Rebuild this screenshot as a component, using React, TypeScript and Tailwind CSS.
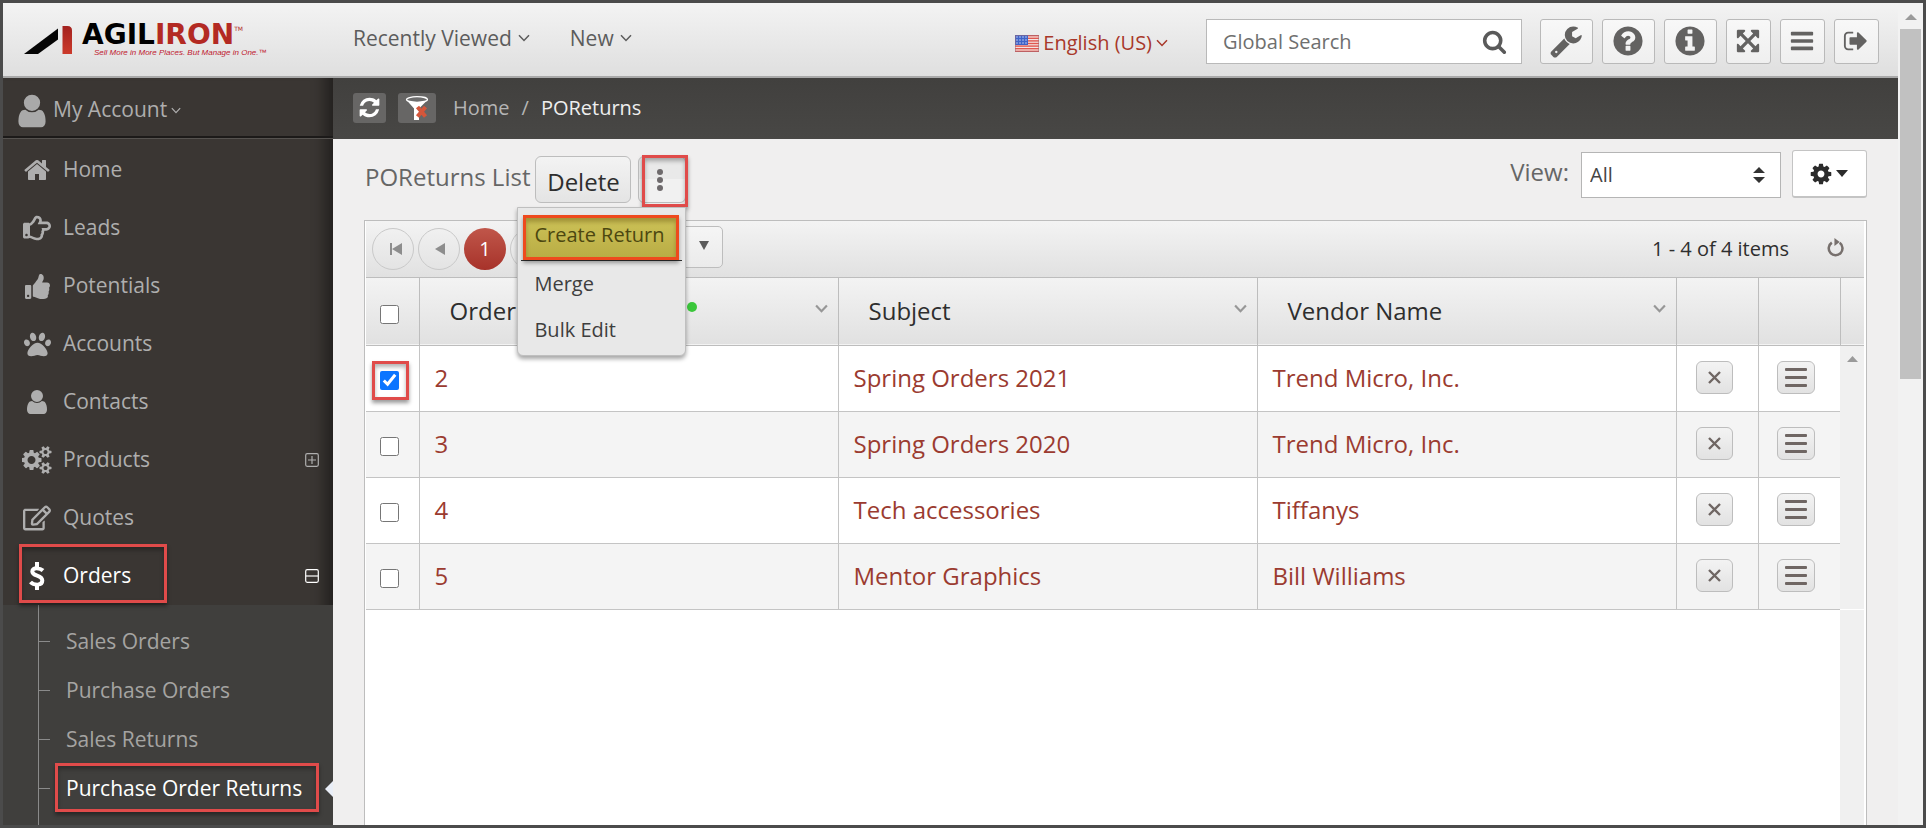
import type { ReactNode } from "react";
import { FaPaw, FaRegEdit, FaRegHandPointRight, FaThumbsUp } from "react-icons/fa";

const paths = {
  user: "M1536 1399q0 109-62.5 187t-150.5 78h-854q-88 0-150.5-78t-62.5-187q0-85 8.5-160.5t31.5-152 58.5-131 94-89 134.5-34.5q131 128 313 128t313-128q76 0 134.5 34.5t94 89 58.5 131 31.5 152 8.5 160.5zm-256-887q0 159-112.5 271.5t-271.5 112.5-271.5-112.5-112.5-271.5 112.5-271.5 271.5-112.5 271.5 112.5 112.5 271.5z",
  home: "M1472 992v480q0 26-19 45t-45 19h-384v-384h-256v384h-384q-26 0-45-19t-19-45v-480q0-1 .5-3t.5-3l575-474 575 474q1 2 1 6zm223-69l-62 74q-8 9-21 11h-3q-13 0-21-7l-692-577-692 577q-12 8-24 7-13-2-21-11l-62-74q-8-10-7-23.5t11-21.5l719-599q32-26 76-26t76 26l244 204v-195q0-14 9-23t23-9h192q14 0 23 9t9 23v408l219 182q10 8 11 21.5t-7 23.5z",
  wrench: "M448 1472q0-26-19-45t-45-19-45 19-19 45 19 45 45 19 45-19 19-45zm644-420l-682 682q-37 37-90 37-52 0-91-37l-106-108q-38-36-38-90 0-53 38-91l681-681q39 98 114.5 173.5t173.5 114.5zm634-435q0 39-23 106-47 134-164.5 217.5t-258.5 83.5q-185 0-316.5-131.5t-131.5-316.5 131.5-316.5 316.5-131.5q58 0 121.5 16.5t107.5 46.5q16 11 16 28t-16 28l-293 169v224l193 107q5-3 79-48.5t135.5-81 70.5-35.5q15 0 23.5 10t8.5 25z",
  question: "M1024 1376v-192q0-14-9-23t-23-9h-192q-14 0-23 9t-9 23v192q0 14 9 23t23 9h192q14 0 23-9t9-23zm256-672q0-88-55.5-163t-138.5-116-170-41q-243 0-371 213-15 24 8 42l132 100q7 6 19 6 16 0 25-12 53-68 86-92 34-24 86-24 48 0 85.5 26t37.5 59q0 38-20 61t-68 45q-63 28-115.5 86.5t-52.5 125.5v36q0 14 9 23t23 9h192q14 0 23-9t9-23q0-19 21.5-49.5t54.5-49.5q32-18 49-28.5t46-35 44.5-48 28-60.5 12.5-81zm384 192q0 209-103 385.5t-279.5 279.5-385.5 103-385.5-103-279.5-279.5-103-385.5 103-385.5 279.5-279.5 385.5-103 385.5 103 279.5 279.5 103 385.5z",
  info: "M1152 1376v-160q0-14-9-23t-23-9h-96v-512q0-14-9-23t-23-9h-320q-14 0-23 9t-9 23v160q0 14 9 23t23 9h96v320h-96q-14 0-23 9t-9 23v160q0 14 9 23t23 9h448q14 0 23-9t9-23zm-128-896v-160q0-14-9-23t-23-9h-192q-14 0-23 9t-9 23v160q0 14 9 23t23 9h192q14 0 23-9t9-23zm640 416q0 209-103 385.5t-279.5 279.5-385.5 103-385.5-103-279.5-279.5-103-385.5 103-385.5 279.5-279.5 385.5-103 385.5 103 279.5 279.5 103 385.5z",
  expand: "M1411 541l-355 355 355 355 144-144q29-31 70-14 39 17 39 59v448q0 26-19 45t-45 19h-448q-42 0-59-40-17-39 14-69l144-144-355-355-355 355 144 144q31 30 14 69-17 40-59 40h-448q-26 0-45-19t-19-45v-448q0-42 40-59 39-17 69 14l144 144 355-355-355-355-144 144q-19 19-45 19-12 0-24-5-40-17-40-59v-448q0-26 19-45t45-19h448q42 0 59 40 17 39-14 69l-144 144 355 355 355-355-144-144q-31-30-14-69 17-40 59-40h448q26 0 45 19t19 45v448q0 42-39 59-13 5-25 5-26 0-45-19z",
  bars: "M1664 1344v128q0 26-19 45t-45 19h-1408q-26 0-45-19t-19-45v-128q0-26 19-45t45-19h1408q26 0 45 19t19 45zm0-512v128q0 26-19 45t-45 19h-1408q-26 0-45-19t-19-45v-128q0-26 19-45t45-19h1408q26 0 45 19t19 45zm0-512v128q0 26-19 45t-45 19h-1408q-26 0-45-19t-19-45v-128q0-26 19-45t45-19h1408q26 0 45 19t19 45z",
  signOut: "M704 1440q0 4 1 20t.5 26.5-3 23.5-10 19.5-20.5 6.5h-320q-119 0-203.5-84.5t-84.5-203.5v-704q0-119 84.5-203.5t203.5-84.5h320q13 0 22.5 9.5t9.5 22.5q0 4 1 20t.5 26.5-3 23.5-10 19.5-20.5 6.5h-320q-66 0-113 47t-47 113v704q0 66 47 113t113 47h312l11.5 1 11.5 3 8 5.5 7 9 2 13.5zm928-544q0 26-19 45l-544 544q-19 19-45 19t-45-19-19-45v-288h-448q-26 0-45-19t-19-45v-384q0-26 19-45t45-19h448v-288q0-26 19-45t45-19 45 19l544 544q19 19 19 45z",
  search: "M1216 832q0-185-131.5-316.5t-316.5-131.5-316.5 131.5-131.5 316.5 131.5 316.5 316.5 131.5 316.5-131.5 131.5-316.5zm512 832q0 52-38 90t-90 38q-54 0-90-38l-343-342q-179 124-399 124-143 0-273.5-55.5t-225-150-150-225-55.5-273.5 55.5-273.5 150-225 225-150 273.5-55.5 273.5 55.5 225 150 150 225 55.5 273.5q0 220-124 399l343 343q37 37 37 90z",
  refresh: "M1639 1056q0 5-1 7-64 268-268 434.5t-478 166.5q-146 0-282.5-55t-243.5-157l-129 129q-19 19-45 19t-45-19-19-45v-448q0-26 19-45t45-19h448q26 0 45 19t19 45-19 45l-137 137q71 66 161 102t187 36q134 0 250-65t186-179q11-17 53-117 8-23 30-23h192q13 0 22.5 9.5t9.5 22.5zm25-800v448q0 26-19 45t-45 19h-448q-26 0-45-19t-19-45 19-45l138-138q-148-137-349-137-134 0-250 65t-186 179q-11 17-53 117-8 23-30 23h-199q-13 0-22.5-9.5t-9.5-22.5v-7q65-268 270-434.5t480-166.5q146 0 284 55.5t245 156.5l130-129q19-19 45-19t45 19 19 45z",
  cog: "M1152 896q0-106-75-181t-181-75-181 75-75 181 75 181 181 75 181-75 75-181zm512-109v222q0 12-8 23t-20 13l-185 28q-19 54-39 91 35 50 107 138 10 12 10 25t-9 23q-27 37-99 108t-94 71q-12 0-26-9l-138-108q-44 23-91 38-16 136-29 186-7 28-36 28h-222q-14 0-24.5-8.5t-11.5-21.5l-28-184q-49-16-90-37l-141 107q-10 9-25 9-14 0-25-11-126-114-165-168-7-10-7-23 0-12 8-23 15-21 51-66.5t54-70.5q-27-50-41-99l-183-27q-13-2-21-12.5t-8-23.5v-222q0-12 8-23t19-13l186-28q14-46 39-92-40-57-107-138-10-12-10-24 0-10 9-23 26-36 98.5-107.5t94.5-71.5q13 0 26 10l138 107q44-23 91-38 16-136 29-186 7-28 36-28h222q14 0 24.5 8.5t11.5 21.5l28 184q49 16 90 37l142-107q9-9 24-9 13 0 25 10 129 119 165 170 7 8 7 22 0 12-8 23-15 21-51 66.5t-54 70.5q26 50 41 98l183 28q13 2 21 12.5t8 23.5z",
  cogs: "M832 896q0-106-75-181t-181-75-181 75-75 181 75 181 181 75 181-75 75-181zm768 512q0-52-38-90t-90-38-90 38-38 90q0 53 37.5 90.5t90.5 37.5 90.5-37.5 37.5-90.5zm0-1024q0-52-38-90t-90-38-90 38-38 90q0 53 37.5 90.5t90.5 37.5 90.5-37.5 37.5-90.5zm-384 421v185q0 10-7 19.5t-16 10.5l-155 24q-11 35-32 76 34 48 90 115 7 11 7 20 0 12-7 19-23 30-82.5 89.5t-78.5 59.5q-11 0-21-7l-115-90q-37 19-77 31-11 108-23 155-7 24-30 24h-186q-11 0-20-7.5t-10-17.5l-23-153q-34-10-75-31l-118 89q-7 7-20 7-11 0-21-8-144-133-144-160 0-9 7-19 10-14 41-53t47-61q-23-44-35-82l-152-24q-10-1-17-9.5t-7-19.5v-185q0-10 7-19.5t16-10.5l155-24q11-35 32-76-34-48-90-115-7-11-7-20 0-12 7-20 22-30 82-89t79-59q11 0 21 7l115 90q34-18 77-32 11-108 23-154 7-24 30-24h186q11 0 20 7.5t10 17.5l23 153q34 10 75 31l118-89q8-7 20-7 11 0 21 8 144 133 144 160 0 8-7 19-12 16-42 54t-45 60q23 48 34 82l152 23q10 2 17 10.5t7 19.5zm640 533v140q0 16-149 31-12 27-30 52 51 113 51 138 0 4-4 7-122 71-124 71-8 0-46-47t-52-68q-20 2-30 2t-30-2q-14 21-52 68t-46 47q-2 0-124-71-4-3-4-7 0-25 51-138-18-25-30-52-149-15-149-31v-140q0-16 149-31 13-29 30-52-51-113-51-138 0-4 4-7 4-2 35-20t59-34 30-16q8 0 46 46.5t52 67.5q20-2 30-2t30 2q51-71 92-112l6-2q4 0 124 70 4 3 4 7 0 25-51 138 17 23 30 52 149 15 149 31zm0-1024v140q0 16-149 31-12 27-30 52 51 113 51 138 0 4-4 7-122 71-124 71-8 0-46-47t-52-68q-20 2-30 2t-30-2q-14 21-52 68t-46 47q-2 0-124-71-4-3-4-7 0-25 51-138-18-25-30-52-149-15-149-31v-140q0-16 149-31 13-29 30-52-51-113-51-138 0-4 4-7 4-2 35-20t59-34 30-16q8 0 46 46.5t52 67.5q20-2 30-2t30 2q51-71 92-112l6-2q4 0 124 70 4 3 4 7 0 25-51 138 17 23 30 52 149 15 149 31z",
};

function Icon({ name, className }: { name: keyof typeof paths; className: string }) {
  return (
    <svg viewBox={name === "cogs" ? "0 0 1920 1792" : "0 0 1792 1792"} fill="currentColor" className={className} aria-hidden="true">
      <path d={paths[name]} />
    </svg>
  );
}

function Chevron({ className, weight = 1.5 }: { className: string; weight?: number }) {
  return (
    <svg viewBox="0 0 12 8" fill="none" stroke="currentColor" strokeWidth={weight} className={className} aria-hidden="true">
      <path d="M1 1.2 6 6.5 11 1.2" />
    </svg>
  );
}

function Logo() {
  return (
    <a href="#" aria-label="Agiliron" className="flex w-[322px] shrink-0 items-center pl-[21px]">
      <svg viewBox="0 0 50 30" className="h-[30px] w-[50px] shrink-0" aria-hidden="true">
        <defs>
          <linearGradient id="bar" x1="0" y1="0" x2="0" y2="1">
            <stop offset="0" stopColor="#a3221f" />
            <stop offset="1" stopColor="#cc3a2b" />
          </linearGradient>
        </defs>
        <path d="M0 29 34 3.500V14.500L14 29Z" fill="#050505" />
        <path d="M38.500 1h5q4.500 0 4.500 4.500V29h-9.500Z" fill="url(#bar)" />
      </svg>
      <span className="flex flex-col pl-2">
        <span className="flex items-start font-['DejaVu_Sans',sans-serif] text-[28px] leading-[26px] font-bold text-black">
          AGIL<span className="text-[#b32a23]">IRON</span>
          <span className="pt-[3px] text-[6px] leading-[8px] font-normal text-[#b32a23]">TM</span>
        </span>
        <span className="flex pl-3 font-['Liberation_Sans',sans-serif] text-[8px] leading-[9px] whitespace-nowrap text-[#c02030] italic">
          Sell More in More Places. But Manage in One.™
        </span>
      </span>
    </a>
  );
}

function Flag() {
  return (
    <svg viewBox="0 0 24 17" className="h-[17px] w-6" aria-hidden="true">
      <rect width="24" height="17" fill="#f3e4e2" />
      {[0, 1, 2, 3, 4, 5, 6].map((i) => (
        <rect key={i} y={i * 2.6} width="24" height="1.400" fill="#e0574f" />
      ))}
      <rect width="13" height="10" fill="#3f63c8" />
      {[2, 5, 8].map((y) => [2, 5, 8, 11].map((x) => <circle key={`${x}-${y}`} cx={x} cy={y} r="0.700" fill="#dfe6fa" />))}
      <rect x="0.500" y="0.500" width="23" height="16" fill="none" stroke="#9a6a78" strokeOpacity="0.500" />
    </svg>
  );
}

const tools: { name: keyof typeof paths; label: string; box: string; icon: string }[] = [
  { name: "wrench", label: "Settings", box: "w-[53px]", icon: "size-[34px]" },
  { name: "question", label: "Help", box: "w-[53px]", icon: "size-[34px]" },
  { name: "info", label: "Information", box: "w-[53px]", icon: "size-[34px]" },
  { name: "expand", label: "Full screen", box: "w-[45px]", icon: "size-[26px]" },
  { name: "bars", label: "Menu", box: "w-[45px]", icon: "size-[26px]" },
  { name: "signOut", label: "Sign out", box: "w-[45px]", icon: "size-[26px]" },
];

function Header() {
  return (
    <header className="flex h-[75px] shrink-0 border-b-2 border-[#a9a9a9] bg-linear-to-b from-[#f3f3f3] to-[#dfdfdf]">
      <Logo />
      <nav className="flex flex-1 gap-10 pt-[21px] pl-7 text-[21px] leading-7 text-[#5c5c5c]">
        <button type="button" className="flex h-7 items-center gap-[6px]">Recently Viewed <Chevron className="h-2 w-3" /></button>
        <button type="button" className="flex h-7 items-center gap-[6px]">New <Chevron className="h-2 w-3" /></button>
      </nav>
      <div className="flex items-start pt-4 pr-[19px]">
        <button type="button" className="mr-[38px] flex h-[45px] items-center pt-[3px] text-[20px] text-[#a8382a]">
          <Flag />
          <span className="px-1">English (US)</span>
          <Chevron className="h-2 w-3" />
        </button>
        <div className="mr-[18px] flex h-[45px] w-[316px] items-center border border-[#b9b9b9] bg-white pr-[14px] pl-4">
          <input aria-label="Global Search" placeholder="Global Search" className="min-w-0 flex-1 text-[20px] text-[#555] outline-none placeholder:text-[#6f6f6f]" />
          <button type="button" aria-label="Search"><Icon name="search" className="size-[25px] text-[#5a5a5a]" /></button>
        </div>
        <div className="flex gap-[9px]">
          {tools.map((t) => (
            <button key={t.name} type="button" aria-label={t.label} className={`${t.box} flex h-[45px] items-center justify-center rounded-[3px] border border-[#b9b9b9] bg-linear-to-b from-[#f8f8f8] to-[#efefef] pr-px pb-px text-[#636261]`}>
              <Icon name={t.name} className={t.icon} />
            </button>
          ))}
        </div>
      </div>
    </header>
  );
}

function Callout({ className }: { className: string }) {
  return <span aria-hidden="true" className={`pointer-events-none absolute border-3 border-[#e04b4a] shadow-[0_3px_4px_rgba(0,0,0,0.4),inset_0_3px_4px_rgba(0,0,0,0.3)] ${className}`} />;
}

function Expander({ open }: { open?: boolean }) {
  return (
    <svg viewBox="0 0 14 14" fill="none" stroke="currentColor" strokeWidth="1.200" className="mr-[14px] ml-auto size-[14px]" aria-hidden="true">
      <rect x="0.700" y="0.700" width="12.600" height="12.600" rx="1.500" />
      <path d={open ? "M1 7h12" : "M3 7h8M7 3v8"} />
    </svg>
  );
}

const DollarIcon = () => (
  <svg viewBox="0 0 16 28" fill="none" stroke="currentColor" className="h-7 w-4" aria-hidden="true">
    <path strokeWidth="4" d="M14 8.500C11.500 6.300 3.300 4.700 3.300 9.500c0 5 10 3.500 10 9 0 5.500-8.500 5-11.800 1.500" />
    <path strokeWidth="4" d="M8 0v5M8 23v5" />
  </svg>
);

const menu: { label: string; icon: ReactNode; state?: "closed" | "open" }[] = [
  { label: "Home", icon: <Icon name="home" className="size-7" /> },
  { label: "Leads", icon: <FaRegHandPointRight className="size-7" /> },
  { label: "Potentials", icon: <FaThumbsUp className="size-[25px]" /> },
  { label: "Accounts", icon: <FaPaw className="size-[27px]" /> },
  { label: "Contacts", icon: <Icon name="user" className="size-7" /> },
  { label: "Products", icon: <Icon name="cogs" className="h-7 w-[31px]" />, state: "closed" },
  { label: "Quotes", icon: <FaRegEdit className="size-7" /> },
  { label: "Orders", icon: <DollarIcon />, state: "open" },
];

const subItems = ["Sales Orders", "Purchase Orders", "Sales Returns", "Purchase Order Returns"];

function Sidebar() {
  return (
    <aside className="flex w-[330px] shrink-0 flex-col bg-[#3a3633] text-[21px] text-[#aeaeae]">
      <div className="flex flex-1 flex-col shadow-[inset_-20px_0_14px_-12px_rgba(0,0,0,0.4)]">
        <button type="button" className="flex h-[61px] items-center gap-[2px] border-b border-[#55524f] pt-[6px] pl-[10px] shadow-[inset_0_-2px_0_#1c1a19]">
          <Icon name="user" className="size-[38px] text-[#a9a9a9]" />
          <span className="pr-[2px] pb-[2px]">My Account</span>
          <Chevron className="mb-px h-[7px] w-[10px]" />
        </button>
        <nav className="flex flex-1 flex-col pt-[2px]">
          {menu.map((m) => (
            <a key={m.label} href="#" className={`relative flex h-[58px] items-center ${m.state === "open" ? "text-white" : ""}`}>
              <span className="flex w-[60px] justify-center pl-[8px]">{m.icon}</span>
              <span className="pb-px">{m.label}</span>
              {m.state && <Expander open={m.state === "open"} />}
              {m.state === "open" && <Callout className="-top-[3px] left-4 h-[59px] w-[148px]" />}
            </a>
          ))}
          <div className="flex flex-1 flex-col bg-[#403f3d] pl-[35px]">
            <div className="flex flex-1 flex-col border-l border-[#8a8a8a] pt-3">
              {subItems.map((s, i) => {
                const current = i === subItems.length - 1;
                return (
                  <a key={s} href="#" className={`relative flex h-[49px] items-center ${current ? "text-white" : "text-[#a5a4a2]"}`}>
                    <span className="mr-4 h-px w-[11px] bg-[#8a8a8a]" />
                    {s}
                    {current && <Callout className="-top-px left-4 h-[49px] w-[264px]" />}
                    {current && (
                      <svg viewBox="0 0 8 16" className="absolute right-0 h-4 w-2" fill="#e9eef7" aria-hidden="true"><path d="M8 0v16L0 8Z" /></svg>
                    )}
                  </a>
                );
              })}
            </div>
          </div>
        </nav>
      </div>
    </aside>
  );
}

function Breadcrumb() {
  return (
    <div className="flex h-[61px] shrink-0 items-center bg-linear-to-b from-[#41403e] to-[#484745] pb-[2px] pl-5 text-[20px] text-[#b5b5b5]">
      <button type="button" aria-label="Refresh" className="flex h-[30px] w-[33px] items-center justify-center rounded-[3px] bg-[#676665] text-white">
        <Icon name="refresh" className="size-[23px]" />
      </button>
      <button type="button" aria-label="Clear filter" className="ml-3 flex h-[30px] w-[38px] items-center justify-center rounded-[3px] bg-[#676665]">
        <svg viewBox="0 0 24 26" className="h-[26px] w-6" aria-hidden="true">
          <path d="M1 4.500 9 13.500V25h5V13.500L23 4.500Z" fill="#fff" />
          <ellipse cx="12" cy="4.500" rx="10.500" ry="2.800" fill="#6d6d6d" stroke="#fff" strokeWidth="1.300" />
          <path d="m12.500 12 8 9.500M20.500 12l-8 9.500" stroke="#d4563a" strokeWidth="4" />
        </svg>
      </button>
      <nav aria-label="Breadcrumb" className="flex gap-3 pl-[17px]">
        <a href="#">Home</a>
        <span>/</span>
        <span className="text-[#eee]">POReturns</span>
      </nav>
    </div>
  );
}

function Toolbar() {
  return (
    <div className="flex h-[81px] shrink-0 pt-[11px] pr-[31px] pl-8">
      <h1 className="pt-[11px] text-[24px] leading-8 text-[#666]">POReturns List</h1>
      <button type="button" className="mt-[6px] ml-[5px] h-[47px] w-24 rounded-[6px] border border-[#bdbdbd] bg-linear-to-b from-[#f3f3f3] to-[#e4e4e4] pt-1 text-[24px] text-[#2e2e2e]">
        Delete
      </button>
      <div className="relative mt-[6px] ml-[7px] h-[47px]">
        <button type="button" aria-label="More actions" aria-expanded="true" className="flex h-full w-[48px] items-center justify-center rounded-[6px] border border-[#bdbdbd] bg-linear-to-b from-[#e9e9e9] from-50% to-[#f1f1f1] to-50% pr-1">
          <svg viewBox="0 0 6 22" className="h-[22px] w-[6px]" fill="#6e6a6c" aria-hidden="true">
            <circle cx="3" cy="3" r="3" /><circle cx="3" cy="11" r="3" /><circle cx="3" cy="19" r="3" />
          </svg>
        </button>
        <Callout className="-top-[1px] left-1 h-[52px] w-[46px]" />
        <ul className="absolute top-[51px] right-0 z-10 h-[149px] w-[169px] rounded-b-[6px] border border-[#bfbfbf] bg-[#e8e8e8] pt-[7px] text-[20px] text-[#3e3e3e] shadow-[0_3px_4px_rgba(0,0,0,0.35)]">
          <li className="mx-[3px] border-b border-[#333]">
            <button type="button" className="mx-[2px] h-[45px] w-[156px] border-3 border-[#ee4a1d] bg-linear-to-b from-[#cdc257] to-[#b9ad45] pb-[6px] pl-2 text-left text-[#4c4710] shadow-[0_3px_4px_rgba(0,0,0,0.35),inset_0_4px_4px_rgba(80,60,0,0.35)]">
              Create Return
            </button>
          </li>
          <li><button type="button" className="h-[46px] pb-px pl-4">Merge</button></li>
          <li><button type="button" className="h-[46px] pb-px pl-4">Bulk Edit</button></li>
        </ul>
      </div>
      <label htmlFor="view" className="ml-auto pt-[6px] pr-3 text-[24px] leading-8 text-[#666]">View:</label>
      <div className="relative mt-[2px] h-[46px] w-[200px]">
        <select id="view" className="h-full w-full appearance-none border border-[#b5b5b5] bg-white pl-2 text-[20px] text-[#444]">
          <option>All</option>
        </select>
        <svg viewBox="0 0 12 16" className="pointer-events-none absolute top-[15px] right-4 h-4 w-3" fill="#333" aria-hidden="true">
          <path d="M0 6 6 0l6 6ZM0 10l6 6 6-6Z" />
        </svg>
      </div>
      <button type="button" aria-label="Options" className="ml-[11px] flex h-12 w-[75px] items-center justify-center gap-[3px] rounded-[3px] border border-[#c4c4c4] border-b-2 bg-white pr-[2px] text-[#2b2b2b]">
        <Icon name="cog" className="size-6" />
        <svg viewBox="0 0 12 7" className="h-[7px] w-3" fill="currentColor" aria-hidden="true"><path d="M0 0h12L6 7Z" /></svg>
      </button>
    </div>
  );
}

function Pager() {
  const round = "flex size-[42px] items-center justify-center rounded-full border border-[#c9c9c9]";
  return (
    <div className="flex h-[57px] shrink-0 items-center border-b border-[#bdbdbd] bg-linear-to-b from-[#f3f3f3] to-[#e1e1e1] pl-[6px] text-[20px] text-[#2e2e2e]">
      <div className="flex gap-1">
        <button type="button" aria-label="First page" className={`${round} text-[#8d8d8d]`}>
          <svg viewBox="0 0 12 12" className="ml-[6px] size-3" fill="currentColor" aria-hidden="true"><path d="M0 0h2v12H0ZM12 0v12L2 6Z" /></svg>
        </button>
        <button type="button" aria-label="Previous page" className={`${round} text-[#8d8d8d]`}>
          <svg viewBox="0 0 10 12" className="ml-[2px] h-3 w-[10px]" fill="currentColor" aria-hidden="true"><path d="M10 0v12L0 6Z" /></svg>
        </button>
        <button type="button" className="size-[42px] rounded-full bg-linear-to-b from-[#c0564a] to-[#a7322a] text-white">1</button>
        <button type="button" aria-label="Next page" className={`${round} text-[#8d8d8d]`} />
      </div>
      <button type="button" aria-label="Items per page" className="mt-[5px] ml-[21px] flex h-[42px] w-[150px] items-center justify-end self-start rounded-[5px] border border-[#bdbdbd] bg-linear-to-b from-[#f5f5f5] to-[#ebebeb] pr-[13px]">
        <svg viewBox="0 0 10 9" className="mb-1 h-[9px] w-[10px]" fill="#5b5b5b" aria-hidden="true"><path d="M0 0h10L5 9Z" /></svg>
      </button>
      <span className="mr-[38px] ml-auto pb-px">1 - 4 of 4 items</span>
      <button type="button" aria-label="Reload" className="mr-5 pb-1">
        <svg viewBox="0 0 16 18" className="h-[19px] w-[17px]" fill="none" stroke="#77706d" strokeWidth="2.400" aria-hidden="true">
          <path d="M4.500 4.400A6.500 6.500 0 1 0 12 4.600" /><path d="M7 0v7.500l5-3.700Z" fill="#77706d" stroke="none" />
        </svg>
      </button>
    </div>
  );
}

const rows = [
  { no: "2", subject: "Spring Orders 2021", vendor: "Trend Micro, Inc.", checked: true },
  { no: "3", subject: "Spring Orders 2020", vendor: "Trend Micro, Inc.", checked: false },
  { no: "4", subject: "Tech accessories", vendor: "Tiffanys", checked: false },
  { no: "5", subject: "Mentor Graphics", vendor: "Bill Williams", checked: false },
];

function HeadCell({ children }: { children: ReactNode }) {
  return (
    <th className="border-r border-[#bdbdbd] pr-[10px] pl-[30px] text-left font-normal">
      <span className="flex items-center pb-px">
        {children}
        <button type="button" aria-label="Column menu" className="ml-auto pb-1 text-[#979797]"><Chevron weight={2} className="h-[9px] w-[13px]" /></button>
      </span>
    </th>
  );
}

function Grid() {
  const small = "flex h-[33px] items-center justify-center rounded-[6px] border border-[#bdbdbd] bg-linear-to-b from-[#f3f3f3] to-[#e2e2e2] text-[#6f6663]";
  return (
    <section className="mr-[31px] ml-[31px] flex flex-1 flex-col border border-b-0 border-[#bdbdbd] bg-white pr-[2px] pl-[1px]">
      <Pager />
      <table className="w-full table-fixed border-collapse text-[24px]">
        <colgroup>
          <col className="w-[53px]" /><col /><col /><col /><col className="w-[82px]" /><col className="w-[82px]" /><col className="w-[24px]" />
        </colgroup>
        <thead className="text-[#2e2e2e]">
          <tr className="h-[67px] border-b border-[#bdbdbd] bg-linear-to-b from-[#f3f3f3] to-[#e1e1e1]">
            <th className="border-r border-[#bdbdbd] pt-[6px] pl-[14px]">
              <input type="checkbox" aria-label="Select all" className="block size-[19px]" />
            </th>
            <HeadCell>
              Order
              <span className="flex flex-1 justify-end pr-[118px]"><span className="mb-2 size-[10px] rounded-full bg-[#3bc73b]" /></span>
            </HeadCell>
            <HeadCell>Subject</HeadCell>
            <HeadCell>Vendor Name</HeadCell>
            <th className="border-r border-[#bdbdbd]" />
            <th className="border-r border-[#bdbdbd]" />
            <th />
          </tr>
        </thead>
        <tbody className="text-[#9b3b30]">
          {rows.map((r, i) => (
            <tr key={r.no} className={`h-[66px] ${i % 2 ? "bg-[#f4f4f4]" : "bg-white"}`}>
              <td className="relative border-r border-b border-[#c4c4c4] pt-[5px] pl-[14px]">
                <input type="checkbox" aria-label={`Select order ${r.no}`} defaultChecked={r.checked} className="block size-[19px] accent-[#0b75ff]" />
                {r.checked && <Callout className="top-[15px] left-[6px] h-[39px] w-[37px]" />}
              </td>
              {[r.no, r.subject, r.vendor].map((text, c) => (
                <td key={c} className="border-r border-b border-[#c4c4c4] pb-px pl-[15px]"><a href="#">{text}</a></td>
              ))}
              <td className="border-r border-b border-[#c4c4c4] pb-px pl-[19px]">
                <button type="button" aria-label="Delete row" className={`${small} w-[37px]`}>
                  <svg viewBox="0 0 13 13" className="size-[13px]" fill="none" stroke="currentColor" strokeWidth="2.400" aria-hidden="true"><path d="m1 1 11 11M12 1 1 12" /></svg>
                </button>
              </td>
              <td className="border-b border-[#c4c4c4] pb-px pl-[18px]">
                <button type="button" aria-label="Row menu" className={`${small} w-[38px]`}>
                  <svg viewBox="0 0 22 19" className="h-[19px] w-[22px]" fill="currentColor" aria-hidden="true">
                    <rect width="22" height="3" rx="1" /><rect y="8" width="22" height="3" rx="1" /><rect y="16" width="22" height="3" rx="1" />
                  </svg>
                </button>
              </td>
              <td className="bg-[#f0f0f0] align-top">
                {i === 0 && <svg viewBox="0 0 11 6" className="mx-auto mt-[10px] h-[6px] w-[11px]" fill="#9a9a9a" aria-hidden="true"><path d="M0 6 5.500 0 11 6Z" /></svg>}
              </td>
            </tr>
          ))}
        </tbody>
      </table>
      <div className="flex flex-1 justify-end"><div className="w-[24px] bg-[#f0f0f0]" /></div>
    </section>
  );
}

export default function App() {
  return (
    <div className="flex min-h-screen border-3 border-[#4b4b4b] bg-[#f0f0f0] font-['Open_Sans','Noto_Sans',sans-serif]">
      <div className="flex min-w-0 flex-1 flex-col">
        <Header />
        <div className="flex flex-1">
          <Sidebar />
          <main className="flex min-w-0 flex-1 flex-col bg-[#f0efef]">
            <Breadcrumb />
            <Toolbar />
            <Grid />
          </main>
        </div>
      </div>
      <div className="flex w-[25px] shrink-0 flex-col items-center bg-[#f2f2f2] pt-[11px]">
        <svg viewBox="0 0 12 6" className="mb-[9px] h-[6px] w-3" fill="#9a9a9a" aria-hidden="true"><path d="M0 6 6 0l6 6Z" /></svg>
        <div className="h-[350px] w-[21px] bg-[#c1c1c1]" />
      </div>
    </div>
  );
}
